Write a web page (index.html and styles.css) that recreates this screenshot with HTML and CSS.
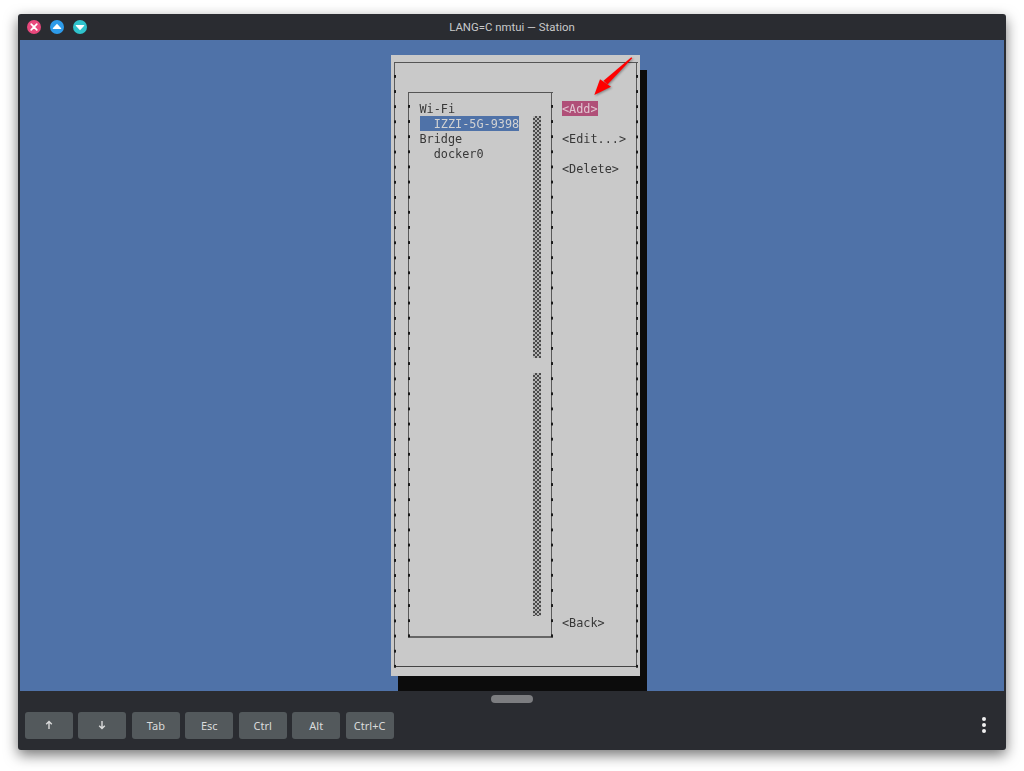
FILE: index.html
```html
<!DOCTYPE html>
<html lang="en">
<head>
<meta charset="utf-8">
<title>LANG=C nmtui — Station</title>
<link rel="stylesheet" href="styles.css">
</head>
<body>
<div class="window">
  <header class="titlebar">
    <div class="controls">
      <span class="ctl ctl-close"><svg viewBox="0 0 14 14" width="14" height="14"><path d="M4.2 4.2l5.6 5.6M9.8 4.2l-5.6 5.6" stroke="#fff" stroke-width="1.7" stroke-linecap="round" fill="none"/></svg></span>
      <span class="ctl ctl-up"><svg viewBox="0 0 14 14" width="14" height="14"><path d="M7 3.8l4.2 4.4q.4.8-.5.8H3.3q-.9 0-.5-.8z" fill="#fff"/></svg></span>
      <span class="ctl ctl-down"><svg viewBox="0 0 14 14" width="14" height="14"><path d="M7 10.2L2.8 5.8q-.4-.8.5-.8h7.4q.9 0 .5.8z" fill="#fff"/></svg></span>
    </div>
    <div class="title">LANG=C nmtui — Station</div>
  </header>
  <main class="terminal">
    <div class="dialog">
      <div class="frame">
        <div class="listbox">
          <div class="list">
            <div class="row">Wi-Fi</div>
            <div class="row"><span class="selected">  IZZI-5G-9398</span></div>
            <div class="row">Bridge</div>
            <div class="row">  docker0</div>
          </div>
          <div class="scrollbar">
            <div class="thumb"></div>
            <div class="thumb"></div>
          </div>
        </div>
        <div class="actions">
          <div class="btn btn-active">&lt;Add&gt;</div>
          <div class="btn">&lt;Edit...&gt;</div>
          <div class="btn">&lt;Delete&gt;</div>
          <div class="btn btn-back">&lt;Back&gt;</div>
        </div>
      </div>
      <svg class="arrow" viewBox="0 0 50 50" width="50" height="50"><path d="M44.3 2.3L45.3 3.3 20.5 29.5 16.5 25.8z" fill="#f00"/><path d="M7.3 40L13 24.3 24 31.7z" fill="#f00"/></svg>
    </div>
  </main>
  <footer class="dock">
    <div class="handle"></div>
    <div class="keys">
      <button class="key" aria-label="Up"><svg viewBox="0 0 8 10" width="8" height="10"><path d="M4 9V1.5M1.2 4.3L4 1.5l2.8 2.8" stroke="#dadbdb" stroke-width="1.4" fill="none"/></svg></button>
      <button class="key" aria-label="Down"><svg viewBox="0 0 8 10" width="8" height="10"><path d="M4 1v7.5M1.2 5.7L4 8.5l2.8-2.8" stroke="#dadbdb" stroke-width="1.4" fill="none"/></svg></button>
      <button class="key">Tab</button>
      <button class="key">Esc</button>
      <button class="key">Ctrl</button>
      <button class="key">Alt</button>
      <button class="key">Ctrl+C</button>
      <div class="more"><i></i><i></i><i></i></div>
    </div>
  </footer>
</div>
</body>
</html>
```

FILE: styles.css
```css
* { box-sizing: border-box; }
html, body { margin: 0; height: 771px; overflow: hidden; background: #fff; }
body { padding: 14px 18px 21px; font-family: "Noto Sans", sans-serif; }

.window {
  width: 988px;
  height: 736px;
  display: flex;
  flex-direction: column;
  background: #2a2c31;
  border-radius: 3px;
  box-shadow: 0 5px 14px rgba(0, 0, 0, .55);
}

.titlebar {
  height: 26px;
  flex: none;
  display: flex;
  align-items: center;
  position: relative;
}
.controls { display: flex; gap: 9.2px; padding-left: 9px; }
.ctl { width: 14px; height: 14px; border-radius: 50%; display: block; }
.ctl svg { display: block; }
.ctl-close { background: #e9487d; }
.ctl-up { background: #2d9bea; }
.ctl-down { background: #2fc3cc; }
.title {
  position: absolute;
  left: 0;
  right: 0;
  text-align: center;
  font: 11.4px Roboto, sans-serif;
  color: #c9cacb;
}

.terminal {
  height: 651px;
  flex: none;
  margin: 0 2px;
  padding: 15px 0 0 371px;
  background: #4f72a8;
  overflow: hidden;
}
.dialog {
  width: 249px;
  height: 621px;
  padding: 7px 2px 9px 3px;
  position: relative;
  background: #c9c9c9;
  box-shadow: 7px 15px 0 #0c0c0c;
  font: 11.83px/17px "DejaVu Sans Mono", monospace;
  color: #383838;
}

/* nmtui draws its boxes with line characters: a thin rule with a tick in every terminal row */
.frame, .listbox {
  position: relative;
  background-image: linear-gradient(#5a5a5a, #5a5a5a), linear-gradient(#5a5a5a, #5a5a5a);
  background-size: 1px 100%;
  background-repeat: no-repeat;
  background-position: left top, right 1px top;
}
.frame::before, .listbox::before {
  content: "";
  position: absolute;
  left: 0;
  right: 0;
  top: 12px;
  bottom: -2px;
  background-image: linear-gradient(#1a1a1a 3px, transparent 3px), linear-gradient(#1a1a1a 3px, transparent 3px);
  background-size: 2px 15.14px;
  background-repeat: repeat-y;
  background-position: left top, right top;
  pointer-events: none;
}
.frame {
  height: 100%;
  display: flex;
  padding: 29px 0 0 14px;
  border-top: 1px solid #555;
  border-bottom: 1px solid #444;
  filter: blur(.3px);
}
.listbox {
  width: 145px;
  height: 546px;
  flex: none;
  display: flex;
  padding: 7.6px 12px 0 11.5px;
  border-top: 1px solid #555;
  border-bottom: 2px solid #666;
}
.list { flex: 1; }
.row { height: 15.14px; white-space: pre; }
.selected { display: block; width: fit-content; background: #4f72a8; color: #d2d2d2; height: 15.14px; }

.scrollbar {
  width: 8px;
  flex: none;
  margin-top: 15px;
  display: flex;
  flex-direction: column;
  gap: 15px;
}
.thumb {
  height: 242.5px;
  background-color: #c9c9c9;
  background-image: conic-gradient(#4a4a4a 25%, #b4b4b4 0 50%, #4a4a4a 0 75%, #b4b4b4 0);
  background-size: 4px 4px;
}

.actions {
  flex: 1;
  height: 545px;
  display: flex;
  flex-direction: column;
  gap: 15.14px;
  padding: 8.7px 0 7px 9px;
}
.btn { height: 15.14px; width: fit-content; }
.btn-active { background: #b04f78; color: #e0c4d0; }
.btn-back { margin-top: auto; }

.arrow {
  position: absolute;
  left: 196px;
  top: 0;
  filter: drop-shadow(1px 1px 1px rgba(0, 0, 0, .35));
}

.dock { flex: 1; display: flex; flex-direction: column; align-items: center; padding-top: 4px; }
.handle { width: 42.5px; height: 7.5px; border-radius: 4px; background: #7c7d80; }
.keys {
  align-self: stretch;
  display: flex;
  align-items: center;
  gap: 5.45px;
  margin-top: 9px;
  padding: 0 20px 0 7px;
}
.key {
  width: 48px;
  height: 27px;
  padding: 0;
  border: 0;
  border-radius: 3px;
  background: #53595c;
  color: #dadbdb;
  font: 11px "Noto Sans", sans-serif;
}
.key svg { display: block; margin: 0 auto; }
.more { margin-left: auto; display: flex; flex-direction: column; gap: 2px; }
.more i { display: block; width: 4px; height: 4px; border-radius: 50%; background: #f0f0f0; }
```
